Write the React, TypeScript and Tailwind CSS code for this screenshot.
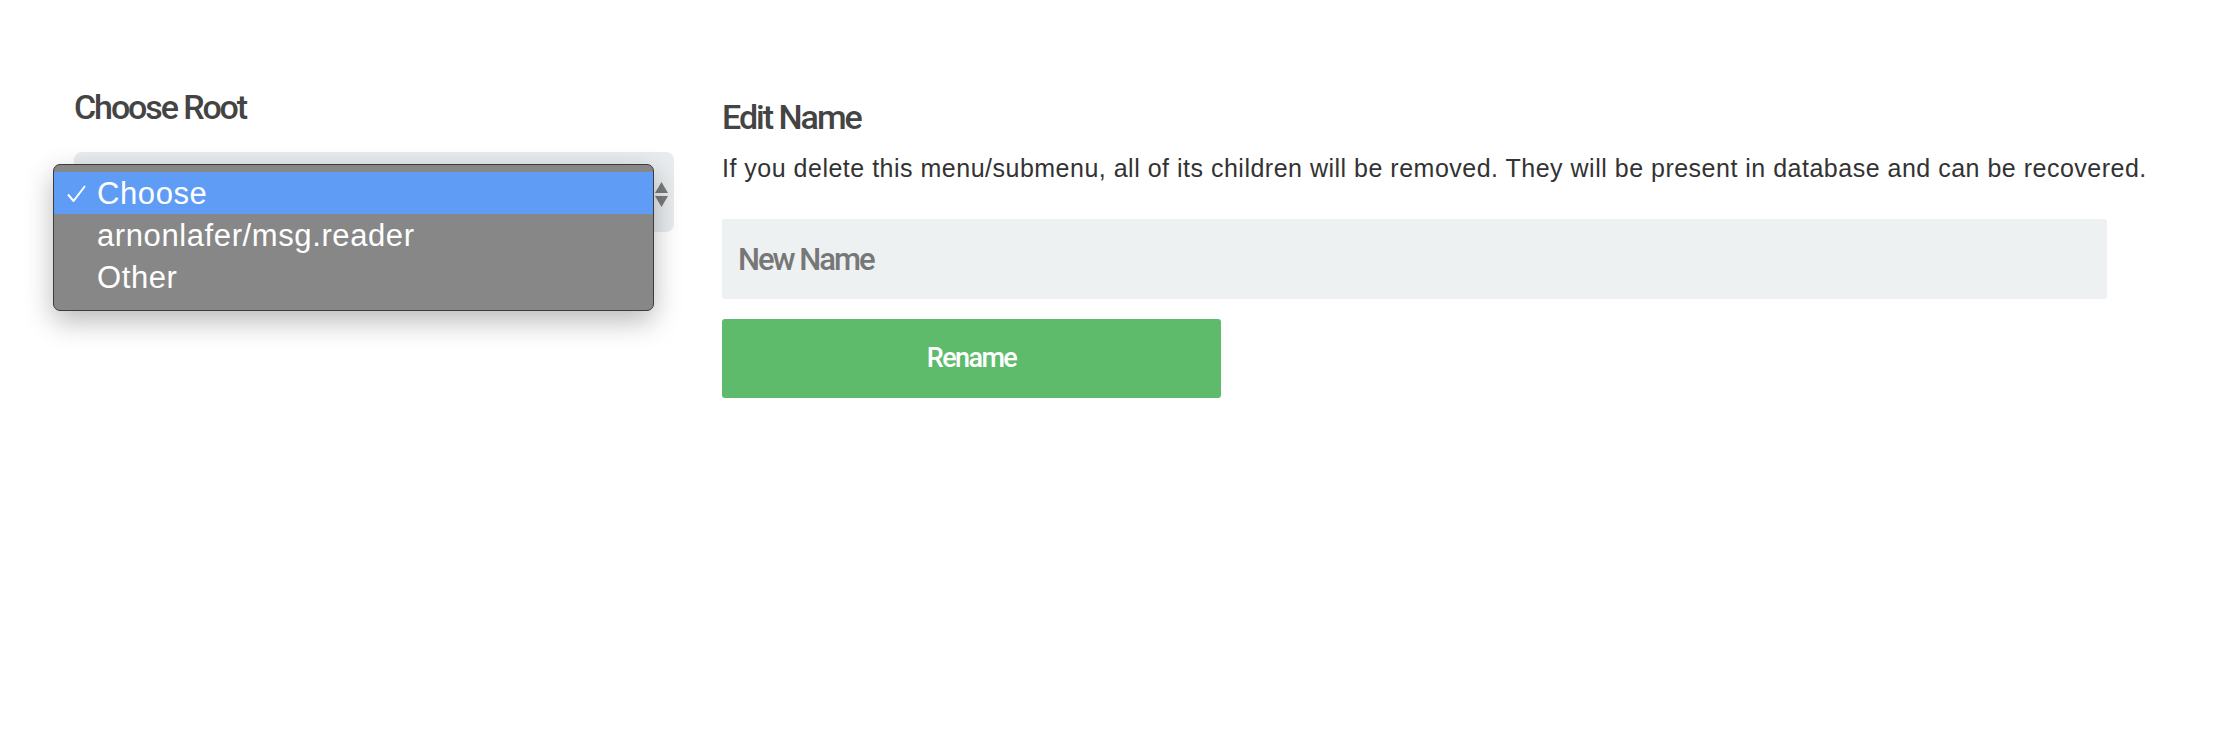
import React from 'react';

const options = ['Choose', 'arnonlafer/msg.reader', 'Other'];

const App: React.FC = () => {
  return (
    <div className="min-h-[738px] w-full bg-white font-['Liberation_Sans',Arial,sans-serif]">
      <div className="flex pl-[74px]">
        {/* Choose Root */}
        <div className="w-[600px] pt-[90px]">
          <h2 className="font-['Roboto',sans-serif] text-[34px] font-medium leading-[34px] tracking-[-2.1px] text-[#444]">
            Choose Root
          </h2>
          <div className="relative mt-[28px] h-[80px] w-[600px] rounded-[8px] bg-[#e9ecee]">
            <svg className="absolute right-[6px] top-[30px]" width="13" height="26" viewBox="0 0 13 26">
              <path d="M6.5 0 L13 11 L0 11 Z" fill="#7b7b7b" />
              <path d="M0 14 L13 14 L6.5 25 Z" fill="#7b7b7b" />
            </svg>

            {/* open dropdown list */}
            <div className="absolute left-[-21px] top-[12px] w-[601px] rounded-[7px] border border-[#3c3c3c] bg-[#878787] pt-[7px] pb-[12px] shadow-[0_10px_28px_rgba(0,0,0,0.28)]">
              {options.map((opt, i) => (
                <div
                  key={opt}
                  className={`flex h-[42px] items-center text-[31px] leading-none tracking-[0.6px] text-white ${
                    i === 0 ? 'bg-[#5f9cf5]' : ''
                  }`}
                >
                  <span className="flex w-[43px] pl-[13px]">
                    {i === 0 && (
                      <svg width="19" height="17" viewBox="0 0 19 17" fill="none">
                        <path d="M1 9.5 L6.5 16 L18 1" stroke="white" strokeWidth="2" />
                      </svg>
                    )}
                  </span>
                  <span>{opt}</span>
                </div>
              ))}
            </div>
          </div>
        </div>

        {/* Edit Name */}
        <div className="ml-[48px] pt-[100px]">
          <h2 className="font-['Roboto',sans-serif] text-[34px] font-medium leading-[34px] tracking-[-2px] text-[#444]">
            Edit Name
          </h2>
          <p className="mt-[22px] whitespace-nowrap text-[25px] leading-none tracking-[0.5px] text-[#333]">
            If you delete this menu/submenu, all of its children will be removed. They will be present in database and can be recovered.
          </p>
          <input
            type="text"
            placeholder="New Name"
            className="mt-[38px] block h-[80px] w-[1385px] rounded-[3px] bg-[#edf1f2] px-[16px] font-['Roboto',sans-serif] text-[31px] font-medium tracking-[-2px] text-[#555] outline-none placeholder:text-[#777]"
          />
          <button
            type="button"
            className="mt-[20px] flex h-[79px] w-[499px] items-center justify-center rounded-[3px] bg-[#5ebb6b] font-['Roboto',sans-serif] text-[27px] font-medium tracking-[-1.6px] text-white"
          >
            Rename
          </button>
        </div>
      </div>
    </div>
  );
};

export default App;
